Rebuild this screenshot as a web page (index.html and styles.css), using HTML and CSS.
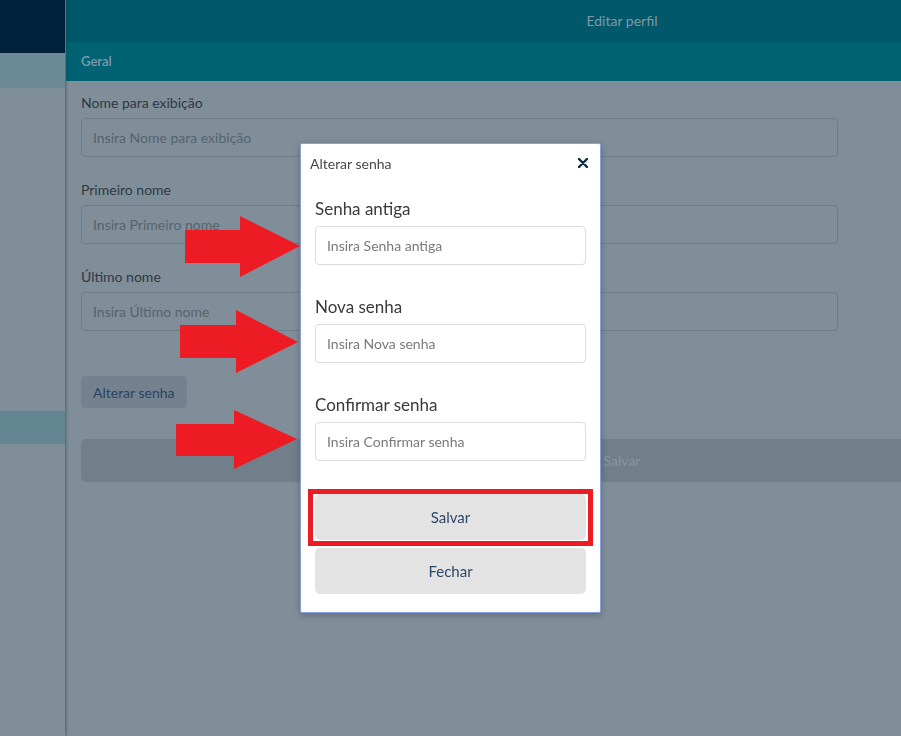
FILE: index.html
```html
<!DOCTYPE html>
<html lang="pt-BR">
<head>
    <meta charset="UTF-8">
    <meta name="viewport" content="width=device-width, initial-scale=1.0">
    <title>Editar perfil</title>
    <link rel="stylesheet" href="styles.css">
</head>
<body>
    <div class="app">
        <aside class="sidebar">
            <div class="brand"></div>
            <div class="side-item"></div>
            <div class="side-item lower"></div>
        </aside>

        <main class="main">
            <header class="topbar">Editar perfil</header>
            <div class="tabbar">Geral</div>

            <form class="profile">
                <div class="group">
                    <label>Nome para exibição</label>
                    <input type="text" placeholder="Insira Nome para exibição">
                </div>
                <div class="group">
                    <label>Primeiro nome</label>
                    <input type="text" placeholder="Insira Primeiro nome">
                </div>
                <div class="group">
                    <label>Último nome</label>
                    <input type="text" placeholder="Insira Último nome">
                </div>
                <button type="button" class="btn-alt">Alterar senha</button>
                <button type="button" class="btn-save">Salvar</button>
            </form>
        </main>
    </div>

    <!-- modal alterar senha -->
    <div class="backdrop">
        <div class="modal">
            <div class="modal-header">
                <span>Alterar senha</span>
                <svg class="close" width="10" height="10" viewBox="0 0 10 10">
                    <path d="M1 1 L9 9 M9 1 L1 9" stroke="#0c2a40" stroke-width="2.4" stroke-linecap="round"/>
                </svg>
            </div>
            <div class="modal-body">
                <div class="field">
                    <label>Senha antiga</label>
                    <input type="password" placeholder="Insira Senha antiga">
                </div>
                <div class="field">
                    <label>Nova senha</label>
                    <input type="password" placeholder="Insira Nova senha">
                </div>
                <div class="field">
                    <label>Confirmar senha</label>
                    <input type="password" placeholder="Insira Confirmar senha">
                </div>
                <div class="actions">
                    <div class="highlight">
                        <button type="button" class="btn-modal save">Salvar</button>
                    </div>
                    <button type="button" class="btn-modal">Fechar</button>
                </div>
            </div>
        </div>
    </div>

    <!-- setas de anotação -->
    <svg class="arrows" width="901" height="736" viewBox="0 0 901 736">
        <polygon points="185,230 240,230 240,216 300,246 240,277 240,263 185,263" fill="#ed1c24"/>
        <polygon points="180,325 236,325 236,310 298,342 236,373 236,358 180,358" fill="#ed1c24"/>
        <polygon points="176,424 234,424 234,410 297,439 234,469 234,456 176,456" fill="#ed1c24"/>
    </svg>
</body>
</html>
```

FILE: styles.css
```css
* {
    margin: 0;
    padding: 0;
    box-sizing: border-box;
}

html, body {
    height: 100%;
    overflow: hidden;
}

body {
    font-family: Lato, 'Open Sans', sans-serif;
    background: #808e99;
}

.app {
    display: flex;
    width: 1178px;
    height: 100%;
}

/* barra lateral */
.sidebar {
    width: 65px;
    flex-shrink: 0;
    display: flex;
    flex-direction: column;
    background: #808e99;
    box-shadow: 1px 0 3px rgba(40, 55, 70, 0.55);
    position: relative;
    z-index: 1;
}

.brand {
    height: 53px;
    background: #012039;
}

.side-item {
    height: 35px;
    background: #6b8a95;
}

.side-item.lower {
    height: 33px;
    margin-top: 323px;
    background: #638591;
}

/* conteúdo */
.main {
    flex: 1;
    margin-left: 1px;
}

.topbar {
    height: 42px;
    background: #01586a;
    color: #7e9aa5;
    font-size: 14px;
    line-height: 42px;
    text-align: center;
}

.tabbar {
    height: 39px;
    background: #016274;
    color: #7f9ba6;
    font-size: 13px;
    font-weight: 600;
    line-height: 39px;
    padding-left: 15px;
}

.profile {
    padding: 12px 15px;
}

.group {
    margin-bottom: 23px;
}

.group label {
    display: block;
    font-size: 14px;
    line-height: 20px;
    color: #2e3943;
    margin-bottom: 5px;
}

.group input {
    display: block;
    width: 757px;
    height: 39px;
    padding: 0 11px;
    border: 1px solid #6f7d88;
    border-radius: 4px;
    background: transparent;
    font-family: inherit;
    font-size: 14px;
}

.group input::placeholder {
    color: #56636d;
}

.btn-alt {
    display: block;
    margin-top: 45px;
    height: 32px;
    padding: 0 12px;
    border: none;
    border-radius: 4px;
    background: #73828e;
    color: #294462;
    font-family: inherit;
    font-size: 14px;
}

.btn-save {
    display: block;
    width: 100%;
    margin-top: 31px;
    height: 43px;
    border: none;
    border-radius: 5px;
    background: #717f8a;
    color: #8894a0;
    font-family: inherit;
    font-size: 14px;
}

/* modal */
.backdrop {
    position: fixed;
    inset: 0;
    padding: 143px 0 0 300px;
}

.modal {
    width: 301px;
    background: #fff;
    border: 1px solid #8a9ee0;
    border-radius: 2px;
    box-shadow: 0 2px 6px rgba(30, 45, 60, 0.35);
}

.modal-header {
    height: 39px;
    display: flex;
    align-items: center;
    justify-content: space-between;
    padding: 0 12px 0 9px;
    font-size: 14px;
    color: #474747;
}

.close {
    margin-top: -2px;
}

.modal-body {
    padding: 14px 14px 18px;
}

.field + .field {
    margin-top: 30px;
}

.field label {
    display: block;
    font-size: 17px;
    line-height: 24px;
    color: #3a3a3a;
    margin-bottom: 5px;
}

.field input {
    display: block;
    width: 100%;
    height: 39px;
    padding: 0 11px;
    border: 1px solid #dcdcdc;
    border-radius: 4px;
    font-family: inherit;
    font-size: 14px;
}

.field input::placeholder {
    color: #7a7a7a;
}

.actions {
    margin-top: 28px;
}

.highlight {
    margin: 0 -7px;
    padding: 0 2px 1px;
    border: 5px solid #ed1c24;
}

.btn-modal {
    display: block;
    width: 100%;
    height: 46px;
    border: none;
    border-radius: 5px;
    background: #e3e3e3;
    color: #2e4869;
    font-family: inherit;
    font-size: 15px;
}

.highlight + .btn-modal {
    margin-top: 2px;
}

.arrows {
    position: fixed;
    left: 0;
    top: 0;
    pointer-events: none;
}
```
